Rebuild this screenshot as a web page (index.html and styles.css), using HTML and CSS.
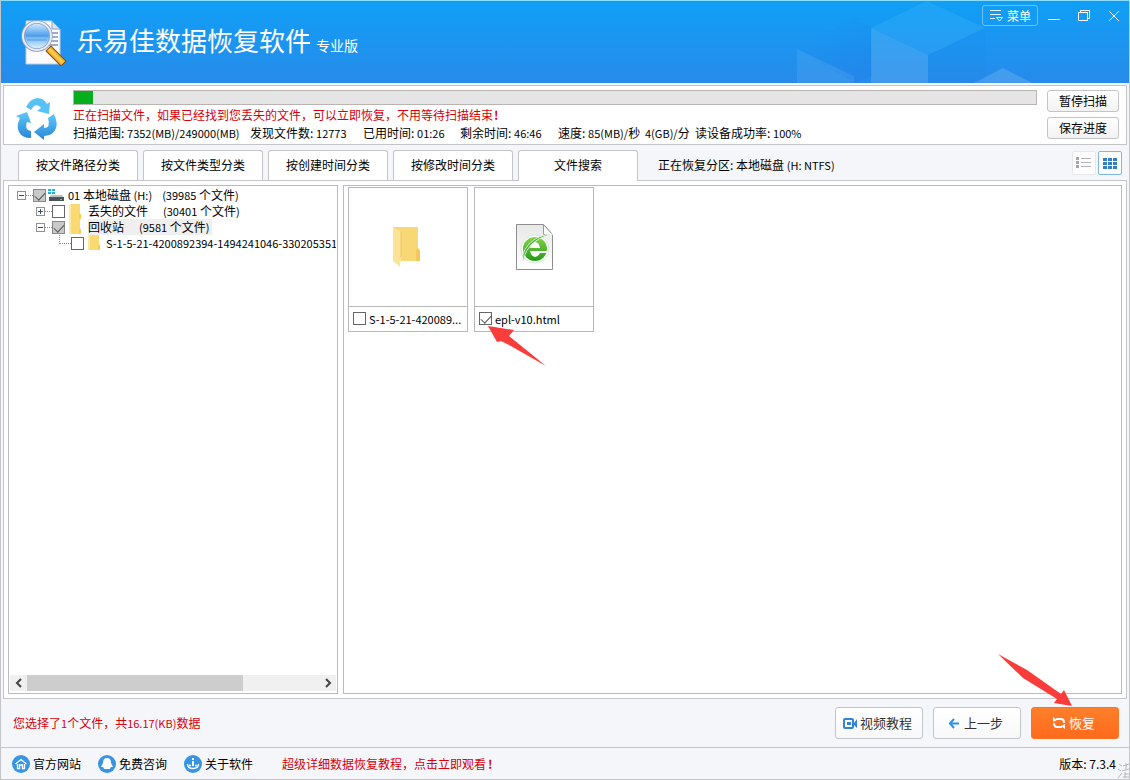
FILE: index.html
```html
<!DOCTYPE html>
<html lang="zh-CN">
<head>
<meta charset="utf-8">
<title>乐易佳数据恢复软件</title>
<link rel="stylesheet" href="styles.css">
</head>
<body>
<div class="app">
  <header class="titlebar">
    <svg class="facets" viewBox="0 0 350 82" width="350" height="82" aria-hidden="true">
      <defs><linearGradient id="shade" x1="0" y1="0" x2="1" y2="1"><stop offset=".2" stop-color="#1769e8" stop-opacity="0"/><stop offset="1" stop-color="#1769e8" stop-opacity=".2"/></linearGradient></defs>
      <path d="M18 47 75 18l18 9v48l-18 7z" fill="url(#shade)"/>
      <path d="M18 48 75 75v7H18z" fill="#fff" opacity=".08"/>
      <path d="M92 27 148 0 206 27 149 54z" fill="#4fc4ff" opacity=".2"/>
      <path d="M92 27 149 54v28H92z" fill="#fff" opacity=".12"/>
      <path d="M149 54 206 27v55h-57z" fill="#1769e8" opacity=".04"/>
      <path d="M195 82 224 67 253 82z" fill="#fff" opacity=".14"/>
    </svg>
    <svg class="logo" viewBox="0 0 46 48" width="46" height="48" aria-hidden="true">
      <defs>
        <linearGradient id="lens" x1="0" y1="0" x2="0" y2="1">
          <stop offset="0" stop-color="#e4f2ff"/><stop offset=".45" stop-color="#58a6ee"/><stop offset="1" stop-color="#e9fbff"/>
        </linearGradient>
        <linearGradient id="grip" x1="0" y1="1" x2="1" y2="0">
          <stop offset="0" stop-color="#c56c06"/><stop offset=".5" stop-color="#ffd24a"/><stop offset="1" stop-color="#c9770b"/>
        </linearGradient>
      </defs>
      <path d="M5 3h26l8 8v35H5z" fill="#fbfaff" stroke="#c5cbe6"/>
      <path d="M31 3v8h8z" fill="#dbe3f4" stroke="#8fa0c4"/>
      <path d="M30 15h7M30 19h7M29 23h8M28 27h9" stroke="#8493b8" stroke-width="1.4"/>
      <circle cx="16" cy="18" r="14" fill="url(#lens)" stroke="#8c9dbd" stroke-width="3.5"/>
      <circle cx="16" cy="18" r="14" fill="none" stroke="#e6edf8" stroke-width="2"/>
      <path d="M5 18h22M6 22h20" stroke="#2f86dd" stroke-width="1.5" opacity=".4"/>
      <path d="m30 33 10 10" stroke="#8a4b09" stroke-width="8" stroke-linecap="square"/>
      <path d="m30 33 10 10" stroke="url(#grip)" stroke-width="6" stroke-linecap="square"/>
    </svg>
    <h1 class="brand">乐易佳数据恢复软件</h1>
    <span class="edition">专业版</span>
    <div class="window-tools">
      <button class="menu-button" type="button">
        <svg viewBox="0 0 15 13" width="15" height="13" fill="none" stroke="#e6f5ff" aria-hidden="true"><path d="M1 1.500h11M1 5.500h11M1 9.500h5"/><path d="M7.500 8.500h6l-3 3.500z"/></svg>
        菜单
      </button>
      <button class="window-button" type="button" aria-label="最小化"><svg viewBox="0 0 14 14" width="14" height="14"><path d="M1 10.500h12" stroke="#fff"/></svg></button>
      <button class="window-button" type="button" aria-label="还原"><svg viewBox="0 0 14 14" width="14" height="14" fill="none" stroke="#fff"><path d="M1.500 3.500h9v8h-9zM3.500 3.500v-2h9v8h-2"/></svg></button>
      <button class="window-button" type="button" aria-label="关闭"><svg viewBox="0 0 14 14" width="14" height="14" stroke="#fff"><path d="m2 2 10 10M12 2 2 12"/></svg></button>
    </div>
  </header>

  <section class="scan">
    <svg class="recycle" viewBox="0 0 42 44" width="42" height="44" aria-hidden="true">
      <defs><linearGradient id="rc" x1="0" y1="0" x2="0" y2="1"><stop offset="0" stop-color="#5dc8f8"/><stop offset="1" stop-color="#2a86d8"/></linearGradient></defs>
      <path d="M10 10Q14 2 21 1q7 0 10 6l3-2-1 12-12-3 4-3q-2-3-5-3-3 1-5 5z" fill="#57c2f6"/>
      <path d="M0 19 11 15l4 11-4-1q-2 6 1 8l3 1v7Q6 41 3 35q-3-6 1-14z" fill="url(#rc)"/>
      <path d="m32 21 6-4q4 9 2 14-2 7-12 8v4l-10-8 10-8v4q7 0 4-10z" fill="url(#rc)"/>
    </svg>
    <div class="scan-body">
      <div class="progress" role="progressbar" aria-label="扫描进度" aria-valuenow="2"><div class="progress-fill" style="width:2%"></div></div>
      <p class="notice">正在扫描文件，如果已经找到您丢失的文件，可以立即恢复，不用等待扫描结束<b>!</b></p>
      <div class="facts">
        <span>扫描范围: <i>7352(MB)/249000(MB)</i></span>
        <span>发现文件数: <i>12773</i></span>
        <span>已用时间: <i>01:26</i></span>
        <span>剩余时间: <i>46:46</i></span>
        <span>速度: <i>85(MB)/</i>秒</span>
        <span><i>4(GB)/</i>分</span>
        <span>读设备成功率: <i>100%</i></span>
      </div>
    </div>
    <div class="scan-actions">
      <button class="small-button" type="button">暂停扫描</button>
      <button class="small-button" type="button">保存进度</button>
    </div>
  </section>

  <nav class="tabs">
    <button class="tab" type="button">按文件路径分类</button>
    <button class="tab" type="button">按文件类型分类</button>
    <button class="tab" type="button">按创建时间分类</button>
    <button class="tab" type="button">按修改时间分类</button>
    <button class="tab tab-active" type="button">文件搜索</button>
    <span class="partition">正在恢复分区: 本地磁盘 <i>(H: NTFS)</i></span>
    <div class="views">
      <button class="view" type="button" aria-label="列表"><svg viewBox="0 0 16 12" width="16" height="12"><path d="M0 0h3v3H0zM0 4h3v3H0zM0 8h3v3H0z" fill="#a5a5a5"/><path d="M5 1.500h10M5 5.500h10M5 9.500h10" stroke="#b5b5b5"/></svg></button>
      <button class="view view-active" type="button" aria-label="缩略图"><svg viewBox="0 0 14 11" width="14" height="11" fill="#2f80c4"><path d="M0 0h4v3H0zM5 0h4v3H5zM10 0h4v3h-4zM0 4h4v3H0zM5 4h4v3H5zM10 4h4v3h-4zM0 8h4v3H0zM5 8h4v3H5zM10 8h4v3h-4z"/></svg></button>
    </div>
  </nav>

  <main class="workspace">
    <aside class="tree-panel">
      <ul class="tree">
        <li class="row">
          <button class="expander" type="button" aria-label="收起"></button><span class="dash"></span>
          <input class="check check-mixed" type="checkbox" id="n1" checked>
          <svg class="row-icon" viewBox="0 0 16 14" width="16" height="14" aria-hidden="true"><path d="M0 1h3v2H0zM4 1h3v2H4zM0 4h3v2H0zM4 4h3v2H4z" fill="#1fb3d8"/><path d="M3 7h11l2 3H1z" fill="#b9c0c4"/><path d="M1 9h15v4H1z" fill="#4a5358"/><path d="M12 11h2v1h-2z" fill="#40e070"/></svg>
          <label for="n1"><i>01</i> 本地磁盘 <i>(H:)</i></label><span class="count"><i>(39985</i> 个文件<i>)</i></span>
        </li>
        <li class="row row-child">
          <button class="expander expander-plus" type="button" aria-label="展开"></button><span class="dash"></span>
          <input class="check" type="checkbox" id="n2">
          <svg class="row-icon" viewBox="0 0 16 16" width="16" height="16" aria-hidden="true"><path d="M2 1h11v10h1v5H2z" fill="#fbd972"/><path d="M2 1h2v15H2z" fill="#fee9a4"/><path d="M12 11h2v5h-2z" fill="#f4cd60"/></svg>
          <label for="n2">丢失的文件</label><span class="count count-lost"><i>(30401</i> 个文件<i>)</i></span>
        </li>
        <li class="row row-child">
          <button class="expander" type="button" aria-label="收起"></button><span class="dash"></span>
          <input class="check check-mixed" type="checkbox" id="n3" checked>
          <svg class="row-icon" viewBox="0 0 16 16" width="16" height="16" aria-hidden="true"><path d="M2 0h11v10h1v5H2z" fill="#fbd972"/><path d="M2 0h2v15H2z" fill="#fee9a4"/><path d="M12 10h2v5h-2z" fill="#f4cd60"/></svg>
          <span class="selected"><label for="n3">回收站</label><span class="count count-bin"><i>(9581</i> 个文件<i>)</i></span></span>
        </li>
        <li class="row row-leaf">
          <span class="elbow"></span>
          <input class="check" type="checkbox" id="n4">
          <svg class="row-icon" viewBox="0 0 16 16" width="16" height="16" aria-hidden="true"><path d="M2 0h11v10h1v5H2z" fill="#fbd972"/><path d="M2 0h2v15H2z" fill="#fee9a4"/><path d="M12 10h2v5h-2z" fill="#f4cd60"/></svg>
          <label for="n4"><i>S-1-5-21-4200892394-1494241046-3302053510</i></label>
        </li>
      </ul>
      <div class="scrollbar">
        <button class="scroll-arrow" type="button" aria-label="向左"><svg viewBox="0 0 8 10" width="8" height="10" fill="none" stroke="#444" stroke-width="2"><path d="M6 1 2 5l4 4"/></svg></button>
        <div class="scroll-track"><div class="scroll-thumb"></div></div>
        <button class="scroll-arrow" type="button" aria-label="向右"><svg viewBox="0 0 8 10" width="8" height="10" fill="none" stroke="#444" stroke-width="2"><path d="m2 1 4 4-4 4"/></svg></button>
      </div>
    </aside>

    <section class="files">
      <article class="file">
        <div class="preview"><svg viewBox="0 0 32 42" width="32" height="42" aria-hidden="true"><path d="M1 1h25v21l2 3v10H9z" fill="#f8d775"/><path d="M26 22l2 3v10h-4V24z" fill="#f3c85c"/><path d="M1 1 9 6v24l-1 11-7-6z" fill="#fde395"/><path d="M9 6v24l-1 1" stroke="#eec765" fill="none"/></svg></div>
        <div class="caption"><input class="check" type="checkbox" id="f1"><label for="f1">S-1-5-21-420089...</label></div>
      </article>
      <article class="file">
        <div class="preview"><svg viewBox="0 0 40 48" width="40" height="48" aria-hidden="true">
          <defs><linearGradient id="pg" x1="0" y1="0" x2="0" y2="1"><stop offset="0" stop-color="#e8e8e8"/><stop offset="1" stop-color="#fff"/></linearGradient><linearGradient id="gr" x1="0" y1="0" x2="0" y2="1"><stop offset="0" stop-color="#84d447"/><stop offset="1" stop-color="#259b18"/></linearGradient></defs>
          <path d="M2.500 1.500h27l9 10v35h-36z" fill="url(#pg)" stroke="#8d8d8d"/><path d="M29.500 1.500v10h9z" fill="#f9f9f9" stroke="#999"/>
          <circle cx="21" cy="26" r="14" fill="#fff" stroke="#d6ead0"/>
          <circle cx="21" cy="26" r="12" fill="url(#gr)"/>
          <path d="M16 25q1-6 5-6t5 6zM16 28h18v2H26q-2 4-5 4-4-1-5-6z" fill="#fff"/>
          <path d="M11 40Q5 32 15 21 25 11 39 11 24 14 16 23 8 33 11 40z" fill="#45ad2c" stroke="#fff" stroke-width=".8"/></svg></div>
        <div class="caption"><input class="check check-on" type="checkbox" id="f2" checked><label for="f2">epl-v10.html</label></div>
        <svg class="pointer pointer-file" viewBox="0 0 60 42" width="60" height="42" aria-hidden="true"><path d="M1 1 27 5 22 11 59 41 22 20 14 16 10 17z" fill="#fa3c3a"/></svg>
      </article>
    </section>
  </main>

  <div class="actions">
    <p class="selection">您选择了<i>1</i>个文件，共<i>16.17(KB)</i>数据</p>
    <button class="action" type="button"><svg viewBox="0 0 15 13" width="15" height="13" aria-hidden="true"><rect x="1" y="2" width="9" height="9" rx="1" fill="none" stroke="#3285d3" stroke-width="2"/><path d="M4 5h4v3H4zM11 6l3-4v9l-3-3z" fill="#3285d3"/></svg>视频教程</button>
    <button class="action action-back" type="button"><svg viewBox="0 0 11 11" width="11" height="11" fill="none" stroke="#2d91e8" stroke-width="2" aria-hidden="true"><path d="M6 1 2 5.500 6 10M2 5.500h9"/></svg>上一步</button>
    <button class="action action-main" type="button"><svg viewBox="0 0 14 14" width="14" height="14" fill="none" stroke="#fff" stroke-width="2" aria-hidden="true"><path d="M4 3h5q3 0 3 4M10 11H5Q2 11 2 7"/><path d="M1 1v5l4-2zM13 13V8L9 10z" fill="#fff" stroke="none"/></svg>恢复
      <svg class="pointer pointer-main" viewBox="0 0 76 54" width="76" height="54" aria-hidden="true"><path d="M1 1 30 17 64 41 67 37 75 53 57 50 60 46 26 25z" fill="#fa3c3a"/></svg>
    </button>
  </div>

  <footer class="status">
    <a class="link" href="#"><svg viewBox="0 0 18 18" width="18" height="18" aria-hidden="true"><circle cx="9" cy="9" r="9" fill="#3795e4"/><path d="m3.500 9L9 4.500 14.500 9M5.500 9v4.500h2V10h3v3.500h2V9" fill="none" stroke="#fff" stroke-width="1.300"/></svg>官方网站</a>
    <a class="link" href="#"><svg viewBox="0 0 18 18" width="18" height="18" aria-hidden="true"><circle cx="9" cy="9" r="9" fill="#3795e4"/><path d="M9 3q4 0 4 5l2 4-2 0q-1 1-1 2H6q0-1-1-2H3l2-4q0-5 4-5z" fill="#fff"/></svg>免费咨询</a>
    <a class="link" href="#"><svg viewBox="0 0 18 18" width="18" height="18" aria-hidden="true"><circle cx="9" cy="9" r="9" fill="#3795e4"/><path d="M8 3h2v2H8zM8 6h2v5H8z" fill="#fff"/><path d="M3.500 9q0 4.500 5.500 4.500T14.500 9M5 10.500h2M11 10.500h2" fill="none" stroke="#fff" stroke-width="1.400"/></svg>关于软件</a>
    <a class="tutorial" href="#">超级详细数据恢复教程，点击立即观看<b>!</b></a>
    <span class="version">版本: 7.3.4</span>
    <svg class="corner" viewBox="0 0 12 17" width="12" height="17" fill="none" stroke="#b4b8bc" aria-hidden="true"><path d="m2 2 3 2M1 7l3 2M1 16l4-5M6 4l6-2M9 1v7M5 9l7-2M7 12h5M8 10v6M6 15h6"/></svg>
  </footer>
</div>
</body>
</html>
```

FILE: styles.css
```css
* { box-sizing: border-box; }

body {
  margin: 0;
  font: 12px/16px "Noto Sans CJK SC", sans-serif;
  color: #000;
}

button, input { margin: 0; padding: 0; font: inherit; color: inherit; }
button { border: 0; background: none; }
svg { display: block; flex: none; }
p, h1, ul { margin: 0; padding: 0; }
i { font-size: 11px; font-style: normal; }
a { color: inherit; text-decoration: none; }

.app {
  display: flex;
  flex-direction: column;
  min-height: 100vh;
  overflow: hidden;
  background: #f5f6f9;
  border: 1px solid #c3c5c9;
  border-top-color: #8bdcf8;
}

/* Title bar */
.titlebar {
  position: relative;
  display: flex;
  align-items: center;
  height: 82px;
  padding-left: 20px;
  color: #fff;
  background: linear-gradient(#109ff6, #278bea);
}
.facets { position: absolute; top: 0; right: 0; }
.brand { margin: 0 0 4px 10px; font-size: 26px; line-height: 36px; font-weight: 400; }
.edition { margin: 6px 0 0 5px; font-size: 14px; }
.window-tools {
  position: relative;
  display: flex;
  align-items: center;
  align-self: flex-start;
  gap: 16px;
  margin: 4px 8px 0 auto;
}
.menu-button {
  display: flex;
  align-items: center;
  justify-content: center;
  gap: 3px;
  width: 56px;
  height: 21px;
  margin-right: -7px;
  border: 1px solid #6cc3f8;
  border-radius: 3px;
}
.window-button { width: 14px; height: 14px; }

/* Scan progress */
.scan {
  display: flex;
  height: 60px;
  margin: 2px 2px 0;
  padding: 4px 7px 0 12px;
  background: #fff;
  border: 1px solid #c3c5c9;
}
.recycle { margin: 7px 15px 0 0; }
.scan-body { flex: 1; }
.progress { height: 15px; background: #e5e5e5; border: 1px solid #b9b4b1; }
.progress-fill { height: 13px; background: #06ae1e; }
.notice { margin-top: 2px; color: #d4000c; }
.notice b { padding-left: 1px; }
.facts {
  display: grid;
  grid-template-columns: 177px 113px 97px 98px 87px 50px auto;
  margin-top: 2px;
  white-space: nowrap;
}
.scan-actions { display: flex; flex-direction: column; gap: 5px; width: 72px; margin-left: 10px; }
.small-button {
  height: 22px;
  line-height: 18px;
  background: linear-gradient(#fff, #f2f2f2);
  border: 1px solid #c2c4c8;
  border-radius: 3px;
}

/* Tabs */
.tabs {
  position: relative;
  display: flex;
  gap: 5px;
  height: 30px;
  margin: 5px 7px 0 17px;
}
.tab {
  width: 120px;
  height: 30px;
  padding-bottom: 2px;
  background: #fff;
  border: 1px solid #c3c5c9;
  border-bottom: 0;
  border-radius: 3px 3px 0 0;
}
.tab-active { height: 31px; }
.partition { margin: 7px 0 0 15px; }
.views { display: flex; gap: 2px; margin: 1px 0 0 auto; }
.view {
  display: grid;
  place-items: center;
  width: 24px;
  height: 24px;
  background: #fdfdfd;
  border: 1px solid #e6e7e9;
  border-radius: 2px;
}
.view-active { border-color: #7db9e4; background: #fff; }

/* Workspace */
.workspace {
  flex: 1;
  display: flex;
  gap: 5px;
  margin: 0 2px;
  padding: 4px;
  background: #fff;
  border: 1px solid #c3c5c9;
}
.tree-panel {
  display: flex;
  flex-direction: column;
  width: 330px;
  padding: 1px;
  border: 1px solid #b9bbbf;
}
.tree { flex: 1; overflow: hidden; list-style: none; }
.row { display: flex; align-items: center; height: 16px; padding-left: 7px; white-space: nowrap; }
.row-child { padding-left: 26px; }
.row-leaf { padding-left: 49px; }
.row-icon { margin: 0 4px 0 2px; }
.row-child .row-icon { margin-right: 5px; }
.expander {
  width: 9px;
  height: 9px;
  border: 1px solid #919191;
  background: linear-gradient(#2d4b8e, #2d4b8e) center / 5px 1px no-repeat #fff;
}
.expander-plus {
  background:
    linear-gradient(#2d4b8e, #2d4b8e) center / 5px 1px no-repeat,
    linear-gradient(#2d4b8e, #2d4b8e) center / 1px 5px no-repeat #fff;
}
.dash { flex: none; width: 7px; border-top: 1px dotted #888; }
.elbow {
  flex: none;
  align-self: flex-start;
  width: 12px;
  height: 9px;
  border: 1px dotted #888;
  border-width: 0 0 1px 1px;
}
.count { margin-left: 10px; }
.count-lost, .count-bin { margin-left: 15px; }
.selected { padding-right: 2px; background: #efefef; }

.check {
  appearance: none;
  flex: none;
  width: 13px;
  height: 13px;
  background: #fff;
  border: 1px solid #666;
}
.check-on::before, .check-mixed::before {
  content: "";
  display: block;
  width: 9px;
  height: 5px;
  margin: 2px 0 0 1px;
  border: solid #555;
  border-width: 0 0 1px 1px;
  transform: rotate(-47deg);
}
.check-mixed { background: #c9c9c9; border-color: #888; }

.scrollbar { display: flex; height: 16px; margin-bottom: 1px; background: #f0f0f0; }
.scroll-arrow { display: grid; place-items: center; width: 17px; }
.scroll-track { flex: 1; }
.scroll-thumb { width: 74%; height: 16px; background: #cdcdcd; }

/* File thumbnails */
.files {
  flex: 1;
  display: flex;
  align-items: flex-start;
  align-content: flex-start;
  flex-wrap: wrap;
  gap: 6px;
  padding: 1px 4px;
  border: 1px solid #b9bbbf;
}
.file { position: relative; width: 120px; border: 1px solid #b8b8b8; }
.preview { display: grid; place-items: center; height: 119px; border-bottom: 1px solid #b8b8b8; }
.caption { display: flex; align-items: center; gap: 3px; height: 24px; padding: 0 0 1px 4px; font-size: 11px; }
.pointer { position: absolute; }
.pointer-file { top: 137px; left: 12px; }
.pointer-main { top: -55px; left: -35px; }

/* Actions */
.actions { display: flex; align-items: center; gap: 10px; height: 48px; padding: 0 10px 0 12px; }
.selection { margin-right: auto; color: #d4000c; }
.action {
  position: relative;
  display: flex;
  align-items: center;
  justify-content: center;
  gap: 2px;
  width: 88px;
  height: 32px;
  padding-right: 3px;
  font-size: 13px;
  color: #333;
  background: linear-gradient(#fff, #f8f8f8);
  border: 1px solid #c2c4c8;
  border-radius: 3px;
}
.action-back { gap: 5px; }
.action-main { gap: 3px; color: #fff; background: linear-gradient(#ff7f2a, #ff6a1c); border-color: #ff7220; }

/* Status bar */
.status {
  position: relative;
  display: flex;
  align-items: center;
  height: 32px;
  padding: 0 13px 0 11px;
  border-top: 1px solid #c3c5c9;
}
.link { display: flex; align-items: center; gap: 3px; margin-right: 17px; }
.tutorial { margin-left: 12px; color: #d4000c; }
.tutorial b { padding-left: 2px; }
.version { margin-left: auto; }
.corner { position: absolute; right: 0; bottom: 0; }
```
